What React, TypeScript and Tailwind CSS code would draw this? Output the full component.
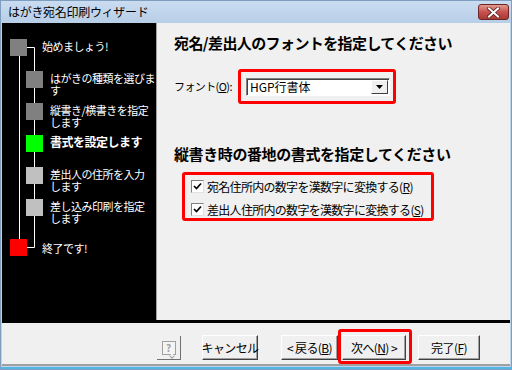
import { Fragment } from "react";

const font = "font-['Noto_Sans_CJK_JP','Liberation_Sans',sans-serif]";

// wizard steps shown in the black side panel
const subSteps = [
  { lines: ["はがきの種類を選びま", "す"], color: "bg-[#808080]" },
  { lines: ["縦書き/横書きを指定", "します"], color: "bg-[#808080]" },
  { lines: ["書式を設定します"], color: "bg-[#00ff00]", current: true },
  { lines: ["差出人の住所を入力", "します"], color: "bg-[#c0c0c0]" },
  { lines: ["差し込み印刷を指定", "します"], color: "bg-[#c0c0c0]" },
];

function Btn({ children, w }: { children: React.ReactNode; w: string }) {
  return (
    <button
      className={`${w} h-[25px] bg-[#f0f0f0] text-[12px] leading-[12px] text-black whitespace-nowrap border border-t-white border-l-white border-b-[#404040] border-r-[#404040] shadow-[inset_-1px_-1px_0_#a0a0a0] flex items-center justify-center tracking-[-0.6px]`}
    >
      {children}
    </button>
  );
}

function Check() {
  return (
    <div className="w-[13px] h-[13px] bg-white border border-t-[#808080] border-l-[#808080] border-b-[#e0e0e0] border-r-[#e0e0e0] flex items-center justify-center">
      <svg width="9" height="9" viewBox="0 0 9 9">
        <path d="M1 4 L3.5 6.5 L8 1.5" stroke="#000" strokeWidth="1.7" fill="none" />
      </svg>
    </div>
  );
}

export default function App() {
  return (
    <div className={`w-[512px] h-[370px] flex flex-col bg-[#bcd3eb] border border-[#7f9dbf] ${font}`}>
      {/* Title bar */}
      <div className="h-[23px] flex items-center justify-between pl-[7px] pr-[2px] bg-gradient-to-b from-[#cadcf0] to-[#b7cee7]">
        <span className="text-[12px] leading-[14px] text-black tracking-[-0.3px]">はがき宛名印刷ウィザード</span>
        <div className="w-[31px] h-[16px] rounded-[3px] border border-[#6b2525] bg-gradient-to-b from-[#e19a8c] via-[#c75050] to-[#a93a32] flex items-center justify-center">
          <svg width="13" height="11" viewBox="0 0 13 11">
            <path d="M2 1.5 L11 9.5 M11 1.5 L2 9.5" stroke="#5a1d1d" strokeWidth="3.6" strokeLinecap="square" />
            <path d="M2 1.5 L11 9.5 M11 1.5 L2 9.5" stroke="#fff" strokeWidth="2" strokeLinecap="square" />
          </svg>
        </div>
      </div>

      {/* Body */}
      <div className="flex-1 flex flex-col mx-[1px] mb-[1px] bg-[#f0f0f0]">
        <div className="h-[300px] flex border-b-[3px] border-black">
          {/* Step panel */}
          <div className="relative w-[154px] bg-black pt-[16px] pl-[8px] text-white text-[11px] leading-[12px] tracking-[-0.5px]">
            <svg className="absolute inset-0 pointer-events-none" width="154" height="297">
              <path d="M17.5 33 V216" stroke="#fff" strokeWidth="1" fill="none" />
              <path d="M25 24.5 H32.5 V224.5 H25" stroke="#fff" strokeWidth="1" fill="none" />
            </svg>
            <div className="relative flex items-start h-[32px]">
              <div className="w-[17px] h-[17px] bg-[#808080]" />
              <span className="ml-[15px] mt-[1px] whitespace-nowrap">始めましょう!</span>
            </div>
            {subSteps.map((s, i) => (
              <div key={i} className="relative flex items-start h-[32px] pl-[16px]">
                <div className={`w-[17px] h-[17px] shrink-0 ${s.color}`} />
                <span className={`ml-[7px] mt-[1px] whitespace-nowrap ${s.current ? "font-bold text-[12px]" : ""}`}>
                  {s.lines.map((l, j) => (
                    <Fragment key={j}>
                      {l}
                      {j < s.lines.length - 1 && <br />}
                    </Fragment>
                  ))}
                </span>
              </div>
            ))}
            <div className="relative flex items-center mt-[8px]">
              <div className="w-[17px] h-[17px] bg-[#ff0000]" />
              <span className="ml-[15px] whitespace-nowrap">終了です!</span>
            </div>
          </div>

          {/* Content */}
          <div className="flex-1 border-l border-[#a0a0a0] pl-[17px] pt-[10px] text-black">
            <h1 className="text-[15px] leading-[20px] font-bold tracking-[-0.6px]">宛名/差出人のフォントを指定してください</h1>

            <div className="flex items-center mt-[16px]">
              <span className="w-[64px] text-[11px] tracking-[-0.6px]">
                フォント(<u>O</u>):
              </span>
              <div className="w-[158px] h-[35px] border-[3px] border-[#ff0000] rounded-[3px] pl-[5px] pt-[6px]">
                <div className="w-[144px] h-[18px] bg-white border border-t-[#808080] border-l-[#808080] border-b-white border-r-white flex items-center pl-[2px] pr-[1px] shadow-[inset_1px_1px_0_#404040]">
                  <span className="flex-1 text-[12px] leading-[12px] ml-[1px]">HGP行書体</span>
                  <div className="w-[17px] h-[14px] bg-[#f0f0f0] border border-t-white border-l-white border-b-[#404040] border-r-[#404040] flex items-center justify-center">
                    <svg width="7" height="4" viewBox="0 0 7 4">
                      <path d="M0 0 H7 L3.5 4 Z" fill="#000" />
                    </svg>
                  </div>
                </div>
              </div>
            </div>

            <h2 className="text-[15px] leading-[20px] font-bold tracking-[-0.4px] mt-[40px]">縦書き時の番地の書式を指定してください</h2>

            <div className="ml-[8px] mt-[8px] w-[252px] h-[49px] border-[3px] border-[#ff0000] rounded-[3px] pl-[6px] pt-[5px] flex flex-col gap-[10px]">
              <div className="flex items-center">
                <Check />
                <span className="ml-[3px] text-[12px] leading-[13px] tracking-[-0.7px]">
                  宛名住所内の数字を漢数字に変換する(<u>R</u>)
                </span>
              </div>
              <div className="flex items-center">
                <Check />
                <span className="ml-[3px] text-[12px] leading-[13px] tracking-[-0.7px]">
                  差出人住所内の数字を漢数字に変換する(<u>S</u>)
                </span>
              </div>
            </div>
          </div>
        </div>

        {/* Button bar */}
        <div className="flex-1 flex items-start pl-[155px] pt-[6px] border-b-2 border-[#a0a0a0]">
          <div className="mt-[7px] w-[24px] h-[24px] flex items-center justify-center border-b border-r border-b-[#707070] border-r-[#707070]">
            <div className="relative w-[14px] h-[14px] border border-[#a0a0a0] bg-[#f4f4f4] flex items-center justify-center text-[10px] leading-[10px] text-[#a0a0a0] font-bold">
              ?
              <div className="absolute -bottom-[4px] right-[1px] w-[4px] h-[4px] border-r border-b border-[#a0a0a0] bg-[#f4f4f4] rotate-45" />
            </div>
          </div>
          <div className="mt-[6px] ml-[21px]">
            <Btn w="w-[56px]">キャンセル</Btn>
          </div>
          <div className="mt-[6px] ml-[23px]">
            <Btn w="w-[57px]">
              &lt; 戻る(<u>B</u>)
            </Btn>
          </div>
          <div className="w-[74px] h-[35px] border-[3px] border-[#ff0000] rounded-[3px] pl-[1px] pt-[3px]">
            <Btn w="w-[64px]">
              次へ(<u>N</u>) &gt;
            </Btn>
          </div>
          <div className="mt-[6px] ml-[6px]">
            <Btn w="w-[62px]">
              完了(<u>F</u>)
            </Btn>
          </div>
        </div>
      </div>
      <div className="h-[2px] bg-[#52b6e6]" />
    </div>
  );
}
